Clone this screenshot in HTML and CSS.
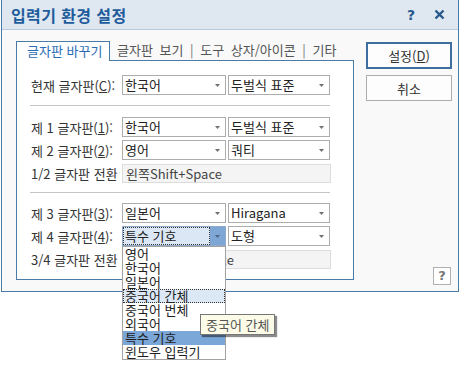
FILE: index.html
```html
<!DOCTYPE html>
<html lang="ko">
<head>
<meta charset="utf-8">
<title>입력기 환경 설정</title>
<link rel="stylesheet" href="styles.css">
</head>
<body>
<div class="window">
  <div class="titlebar">
    <span class="title">입력기 환경 설정</span>
    <span class="tb-btns">
      <span class="tb-help">?</span>
      <svg class="tb-close" width="11" height="11" viewBox="0 0 11 11"><path d="M1.5 1.5 L9.5 9.5 M9.5 1.5 L1.5 9.5" stroke="#27598c" stroke-width="2.4" fill="none"/></svg>
    </span>
  </div>
  <div class="content">
    <div class="tabs-col">
      <div class="tabstrip">
        <div class="tab active">글자판 바꾸기</div>
        <div class="tab-rest">글자판 보기 <span class="bar">|</span> 도구 상자/아이콘 <span class="bar">|</span> 기타</div>
      </div>
      <div class="panel">
        <div class="row">
          <span class="label">현재 글자판(<u>C</u>):</span>
          <div class="combo a"><span class="ctext">한국어</span><span class="carrow"><svg width="5" height="3" viewBox="0 0 5 3"><path d="M0 0H5L2.5 3Z" fill="#707070"/></svg></span></div>
          <div class="combo b"><span class="ctext">두벌식 표준</span><span class="carrow"><svg width="5" height="3" viewBox="0 0 5 3"><path d="M0 0H5L2.5 3Z" fill="#707070"/></svg></span></div>
        </div>
        <div class="sep-line first"></div>
        <div class="group">
          <div class="row">
            <span class="label">제 1 글자판(<u>1</u>):</span>
            <div class="combo a"><span class="ctext">한국어</span><span class="carrow"><svg width="5" height="3" viewBox="0 0 5 3"><path d="M0 0H5L2.5 3Z" fill="#707070"/></svg></span></div>
            <div class="combo b"><span class="ctext">두벌식 표준</span><span class="carrow"><svg width="5" height="3" viewBox="0 0 5 3"><path d="M0 0H5L2.5 3Z" fill="#707070"/></svg></span></div>
          </div>
          <div class="row">
            <span class="label">제 2 글자판(<u>2</u>):</span>
            <div class="combo a"><span class="ctext">영어</span><span class="carrow"><svg width="5" height="3" viewBox="0 0 5 3"><path d="M0 0H5L2.5 3Z" fill="#707070"/></svg></span></div>
            <div class="combo b"><span class="ctext">쿼티</span><span class="carrow"><svg width="5" height="3" viewBox="0 0 5 3"><path d="M0 0H5L2.5 3Z" fill="#707070"/></svg></span></div>
          </div>
          <div class="row">
            <span class="label">1/2 글자판 전환</span>
            <div class="textbox">왼쪽Shift+Space</div>
          </div>
        </div>
        <div class="sep-line second"></div>
        <div class="group">
          <div class="row">
            <span class="label">제 3 글자판(<u>3</u>):</span>
            <div class="combo a"><span class="ctext">일본어</span><span class="carrow"><svg width="5" height="3" viewBox="0 0 5 3"><path d="M0 0H5L2.5 3Z" fill="#707070"/></svg></span></div>
            <div class="combo b"><span class="ctext">Hiragana</span><span class="carrow"><svg width="5" height="3" viewBox="0 0 5 3"><path d="M0 0H5L2.5 3Z" fill="#707070"/></svg></span></div>
          </div>
          <div class="row">
            <span class="label">제 4 글자판(<u>4</u>):</span>
            <div class="combo a focused">
              <span class="ctext">특수 기호</span><span class="carrow"><svg width="5" height="3" viewBox="0 0 5 3"><path d="M0 0H5L2.5 3Z" fill="#4d6684"/></svg></span>
              <ul class="dropdown">
                <li>영어</li>
                <li>한국어</li>
                <li>일본어</li>
                <li class="hover">중국어 간체</li>
                <li>중국어 번체</li>
                <li>외국어</li>
                <li class="selected">특수 기호</li>
                <li>윈도우 입력기</li>
              </ul>
              <div class="tooltip">중국어 간체</div>
            </div>
            <div class="combo b"><span class="ctext">도형</span><span class="carrow"><svg width="5" height="3" viewBox="0 0 5 3"><path d="M0 0H5L2.5 3Z" fill="#707070"/></svg></span></div>
          </div>
          <div class="row">
            <span class="label">3/4 글자판 전환</span>
            <div class="textbox">오른쪽Shift+Space</div>
          </div>
        </div>
      </div>
    </div>
    <div class="btn-col">
      <button class="btn default">설정(<u>D</u>)</button>
      <button class="btn">취소</button>
      <div class="help">?</div>
    </div>
  </div>
</div>
</body>
</html>
```
FILE: styles.css
```css
html, body {
  height: 370px;
}

body {
  margin: 0;
  background: #ffffff;
  font-family: "Noto Sans CJK KR", "Noto Sans", sans-serif;
  font-size: 13px;
  color: #333333;
}

.window {
  margin-left: 1px;
  width: 458px;
  height: 292px;
  box-sizing: border-box;
  border: 1px solid #4a7aa6;
  border-top: none;
  background: #f9f9f9;
  display: flex;
  flex-direction: column;
}

.titlebar {
  height: 29px;
  flex: none;
  border-bottom: 1px solid #b7c9dc;
  background: #dfe8f1;
  display: flex;
  align-items: center;
  justify-content: space-between;
  padding: 0 13px 0 9px;
}

.title {
  font-weight: bold;
  font-size: 16px;
  letter-spacing: 0.4px;
  color: #1f5c9c;
  line-height: 20px;
}

.tb-btns {
  display: flex;
  align-items: center;
  gap: 19px;
}

.tb-help {
  font-family: "DejaVu Sans", sans-serif;
  font-weight: bold;
  font-size: 14px;
  color: #27598c;
  line-height: 16px;
}

.tb-close {
  display: block;
}

.content {
  flex: 1;
  display: flex;
  padding: 11px 0 0 14px;
}

.tabs-col {
  width: 338px;
  flex: none;
}

.tabstrip {
  display: flex;
  align-items: flex-end;
  height: 19px;
}

.tab {
  line-height: 18px;
}

.tab.active {
  position: relative;
  z-index: 1;
  width: 94px;
  height: 20px;
  box-sizing: border-box;
  margin-bottom: -1px;
  border: 1px solid #4a7aa6;
  border-bottom: none;
  background: #ffffff;
  color: #2a6cb3;
  padding-left: 10px;
}

.tab-rest {
  margin-left: 7px;
  color: #555555;
  line-height: 18px;
  white-space: pre;
  height: 19px;
  word-spacing: 3px;
}

.bar {
  color: #777777;
}

.panel {
  height: 220px;
  box-sizing: border-box;
  border: 1px solid #4a7aa6;
  background: #ffffff;
  padding: 14px 0 0 14px;
}

.group {
  display: flex;
  flex-direction: column;
  gap: 3px;
}

.row {
  display: flex;
  align-items: center;
  height: 20px;
}

.label {
  width: 91px;
  flex: none;
  white-space: nowrap;
  color: #333333;
}

.combo {
  position: relative;
  height: 20px;
  box-sizing: border-box;
  border: 1px solid #adadad;
  background: #ffffff;
  display: flex;
  align-items: stretch;
}

.combo.a {
  width: 104px;
}

.combo.b {
  width: 102px;
  margin-left: 2px;
}

.ctext {
  flex: 1;
  padding-left: 2px;
  line-height: 18px;
  white-space: nowrap;
  color: #222222;
}

.carrow {
  width: 15px;
  flex: none;
  display: flex;
  align-items: center;
  justify-content: center;
  padding-top: 1px;
  box-sizing: border-box;
}

.carrow svg {
  display: block;
}

.combo.focused {
  border-color: #8fa9c6;
  background: #dbe7f4;
}

.combo.focused .ctext {
  outline: 1px dotted #333333;
  outline-offset: -1px;
}

.combo.focused .carrow {
  background: #7ea7d5;
}

.textbox {
  width: 209px;
  height: 19px;
  box-sizing: border-box;
  border: 1px solid #dcdcdc;
  background: #f4f4f4;
  color: #444444;
  line-height: 17px;
  padding-left: 3px;
  white-space: nowrap;
  overflow: hidden;
}

.sep-line {
  width: 300px;
  height: 1px;
  background: #c4c4c4;
}

.sep-line.first {
  margin: 10px 0 11px -1px;
}

.sep-line.second {
  margin: 9px 0 10px -1px;
}

.dropdown {
  position: absolute;
  z-index: 5;
  top: 19px;
  left: -1px;
  width: 104px;
  box-sizing: border-box;
  margin: 0;
  padding: 0;
  list-style: none;
  border: 1px solid #a3a3a3;
  background: #ffffff;
}

.dropdown li {
  height: 14px;
  line-height: 14px;
  padding-left: 2px;
  color: #1e1e1e;
  white-space: nowrap;
}

.dropdown li.hover {
  background: #dce8f5;
  outline: 1px dotted #333333;
  outline-offset: -1px;
}

.dropdown li.selected {
  background: #7ba7d8;
}

.tooltip {
  position: absolute;
  z-index: 6;
  left: 77px;
  top: 87px;
  height: 21px;
  box-sizing: border-box;
  padding: 0 5px;
  border: 1px solid #767676;
  background: #fbfbe8;
  color: #555555;
  line-height: 19px;
  white-space: nowrap;
  box-shadow: 2px 2px 1px rgba(0, 0, 0, 0.45);
}

.btn-col {
  width: 86px;
  flex: none;
  margin-left: 12px;
  display: flex;
  flex-direction: column;
  padding: 1px 0 6px 0;
}

.btn {
  font-family: inherit;
  font-size: 13px;
  color: #333333;
  background: #fdfdfd;
  border: 1px solid #adadad;
  height: 26px;
  padding: 0;
  margin: 0;
}

.btn.default {
  height: 27px;
  border: 2px solid #3d6e9f;
}

.btn + .btn {
  margin-top: 6px;
}

.help {
  margin-top: auto;
  align-self: flex-end;
  width: 18px;
  height: 18px;
  box-sizing: border-box;
  border: 1px solid #b0b0b0;
  background: #ffffff;
  color: #777777;
  font-family: "DejaVu Sans", sans-serif;
  font-weight: bold;
  font-size: 13px;
  line-height: 16px;
  text-align: center;
  margin-right: 1px;
}
```
